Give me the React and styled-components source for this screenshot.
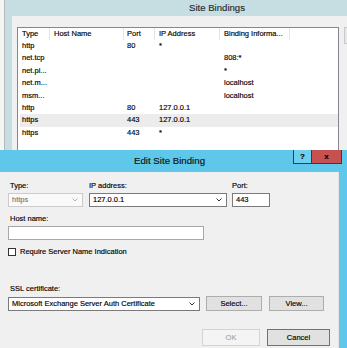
import React from 'react';
import styled, { createGlobalStyle } from 'styled-components';

const Global = createGlobalStyle`
  html, body { margin: 0; padding: 0; }
  body {
    font-family: "Liberation Sans", Arial, sans-serif;
    font-size: 7.5px;
    color: #000;
    -webkit-text-stroke: 0.15px currentColor;
  }
  * { box-sizing: border-box; }
`;

const Desktop = styled.div`
  position: relative;
  width: 347px;
  height: 348px;
  overflow: hidden;
  background: #f3f3f3;
  display: flex;
  align-items: flex-start;
`;

const ParentStrip = styled.div`
  flex: none;
  width: 5px;
  height: 348px;
  background: #f5f5f5;
  border-right: 1px solid #b9b9b9;
`;

const BackWindow = styled.div`
  flex: none;
  width: 424px;
  height: 360px;
  background: #c6dde2;
  padding: 0 7px;
  display: flex;
  flex-direction: column;
`;

const BackTitle = styled.div`
  height: 16px;
  line-height: 16px;
  text-align: center;
  font-size: 9.6px;
  color: #2a2a2a;
`;

const BackBody = styled.div`
  flex: 1;
  background: #f0f0f0;
  padding: 11px 0 0 5px;
  display: flex;
  gap: 5px;
  align-items: flex-start;
`;

const List = styled.div`
  width: 322px;
  height: 140px;
  background: #fff;
  border: 1px solid #828790;
`;

const cols = '32px 74px 31px 65px 70px';

const Header = styled.div`
  display: grid;
  grid-template-columns: ${cols};
  height: 12px;
`;

const HeadCell = styled.div`
  border-right: 1px solid #e5e5e5;
  padding-left: ${p => p.$pad || 4}px;
  line-height: 12px;
  white-space: nowrap;
  overflow: hidden;
`;

const Row = styled.div`
  display: grid;
  grid-template-columns: ${cols};
  height: 12.4px;
  line-height: 12.4px;
  background: ${p => (p.$selected ? 'linear-gradient(to right, transparent 2px, #ececec 2px)' : 'transparent')};
`;

const Cell = styled.div`
  padding-left: ${p => p.$pad || 4}px;
  white-space: nowrap;
`;

const SideButton = styled.div`
  width: 60px;
  height: 17px;
  background: #e8e8e8;
  border: 1px solid #c8c8c8;
`;

/* Edit dialog */
const Dialog = styled.div`
  position: absolute;
  left: -8px;
  top: 150px;
  width: 355px;
  height: 210px;
  background: #5fc7e9;
  padding: 0 8px;
  display: flex;
  flex-direction: column;
`;

const TitleBar = styled.div`
  position: relative;
  height: 22px;
  line-height: 22px;
  text-align: center;
  font-size: 9.7px;
  color: #111;
`;

const CaptionButtons = styled.div`
  position: absolute;
  top: 0;
  right: -3px;
  display: flex;
`;

const CapButton = styled.div`
  width: ${p => p.$w}px;
  height: 14px;
  background: ${p => p.$bg};
  border: 1px solid #2a3f4d;
  border-top: none;
  border-left-width: ${p => (p.$first ? 1 : 0)}px;
  display: flex;
  align-items: center;
  justify-content: center;
  font-weight: bold;
  font-size: 8px;
  line-height: 1;
  color: #000;
`;

const Client = styled.div`
  flex: 1;
  background: #f0f0f0;
  border-right: 1px solid #e4e4e4;
  padding: 9px 0 0 8px;
  display: flex;
  flex-direction: column;
`;

const FieldRow = styled.div`
  display: flex;
  align-items: flex-end;
  margin-top: ${p => p.$mt || 0}px;
`;

const Group = styled.div`
  display: flex;
  flex-direction: column;
  gap: ${p => (p.$gap === undefined ? 2 : p.$gap)}px;
  margin-left: ${p => p.$ml || 0}px;
`;

const Label = styled.div`
  height: 10px;
  line-height: 10px;
  padding-left: ${p => p.$pad || 0}px;
  white-space: nowrap;
`;

const Box = styled.div`
  position: relative;
  width: ${p => p.$w}px;
  height: 14px;
  line-height: 12px;
  padding-left: 3px;
  background: ${p => (p.$disabled ? '#fafafa' : '#fff')};
  border: 1px solid ${p => (p.$disabled ? '#cccccc' : p.$light ? '#a7a7a7' : '#7a7a7a')};
  color: ${p => (p.$disabled ? '#7a7a7a' : '#000')};
  white-space: nowrap;
`;

const ChevronWrap = styled.span`
  position: absolute;
  right: 4px;
  top: 4px;
  width: 6px;
  height: 4px;
  display: flex;
`;

const Chevron = ({ disabled }) => (
  <ChevronWrap>
    <svg width="6" height="4" viewBox="0 0 6 4">
      <polyline points="0.5,0.5 3,3 5.5,0.5" fill="none" stroke={disabled ? '#b0b0b0' : '#333'} strokeWidth="1" />
    </svg>
  </ChevronWrap>
);

const CheckRow = styled.label`
  display: flex;
  align-items: center;
  gap: 4px;
  height: 9px;
  margin-top: 7px;
`;

const CheckBox = styled.span`
  width: 8px;
  height: 8px;
  background: #fff;
  border: 1px solid #333;
`;

const Button = styled.div`
  width: ${p => p.$w}px;
  height: ${p => p.$h || 15}px;
  margin-left: ${p => p.$ml || 0}px;
  display: flex;
  align-items: center;
  justify-content: center;
  background: ${p => (p.$disabled ? '#f4f4f4' : '#e1e1e1')};
  border: 1px solid ${p => (p.$disabled ? '#d4d4d4' : p.$default ? '#3c7fb1' : '#adadad')};
  color: ${p => (p.$disabled ? '#a8a8a8' : '#000')};
`;

const Footer = styled.div`
  display: flex;
  justify-content: flex-end;
  gap: 7px;
  padding-right: 8px;
  margin-top: 18px;
`;

const rows = [
  ['http', '80', '*', ''],
  ['net.tcp', '', '', '808:*'],
  ['net.pi...', '', '', '*'],
  ['net.m...', '', '', 'localhost'],
  ['msm...', '', '', 'localhost'],
  ['http', '80', '127.0.0.1', ''],
  ['https', '443', '127.0.0.1', ''],
  ['https', '443', '*', ''],
];

export default function App() {
  return (
    <>
      <Global />
      <Desktop>
        <ParentStrip />
        <BackWindow>
          <BackTitle>Site Bindings</BackTitle>
          <BackBody>
            <List>
              <Header>
                <HeadCell $pad={4}>Type</HeadCell>
                <HeadCell>Host Name</HeadCell>
                <HeadCell $pad={3}>Port</HeadCell>
                <HeadCell>IP Address</HeadCell>
                <HeadCell>Binding Informa...</HeadCell>
              </Header>
              {rows.map((r, i) => (
                <Row key={i} $selected={i === 6}>
                  <Cell $pad={4}>{r[0]}</Cell>
                  <Cell />
                  <Cell $pad={3}>{r[1]}</Cell>
                  <Cell>{r[2]}</Cell>
                  <Cell>{r[3]}</Cell>
                </Row>
              ))}
            </List>
            <SideButton />
          </BackBody>
        </BackWindow>

        <Dialog>
          <TitleBar>
            Edit Site Binding
            <CaptionButtons>
              <CapButton $w={19} $bg="#6fcfee" $first>?</CapButton>
              <CapButton $w={30} $bg="#c75050">x</CapButton>
            </CaptionButtons>
          </TitleBar>
          <Client>
            <FieldRow>
              <Group>
                <Label $pad={2}>Type:</Label>
                <Box $w={75} $disabled>https<Chevron disabled /></Box>
              </Group>
              <Group $ml={6}>
                <Label>IP address:</Label>
                <Box $w={138}>127.0.0.1<Chevron /></Box>
              </Group>
              <Group $ml={5}>
                <Label>Port:</Label>
                <Box $w={38}>443</Box>
              </Group>
            </FieldRow>
            <FieldRow $mt={7}>
              <Group>
                <Label $pad={2}>Host name:</Label>
                <Box $w={196} $light />
              </Group>
            </FieldRow>
            <CheckRow>
              <CheckBox />
              Require Server Name Indication
            </CheckRow>
            <FieldRow $mt={28}>
              <Group $gap={3}>
                <Label $pad={2}>SSL certificate:</Label>
                <Box $w={192}>Microsoft Exchange Server Auth Certificate<Chevron /></Box>
              </Group>
              <Button $w={56} $ml={6}>Select...</Button>
              <Button $w={55} $ml={7}>View...</Button>
            </FieldRow>
            <Footer>
              <Button $w={58} $h={17} $disabled>OK</Button>
              <Button $w={63} $h={17} $default>Cancel</Button>
            </Footer>
          </Client>
        </Dialog>
      </Desktop>
    </>
  );
}
